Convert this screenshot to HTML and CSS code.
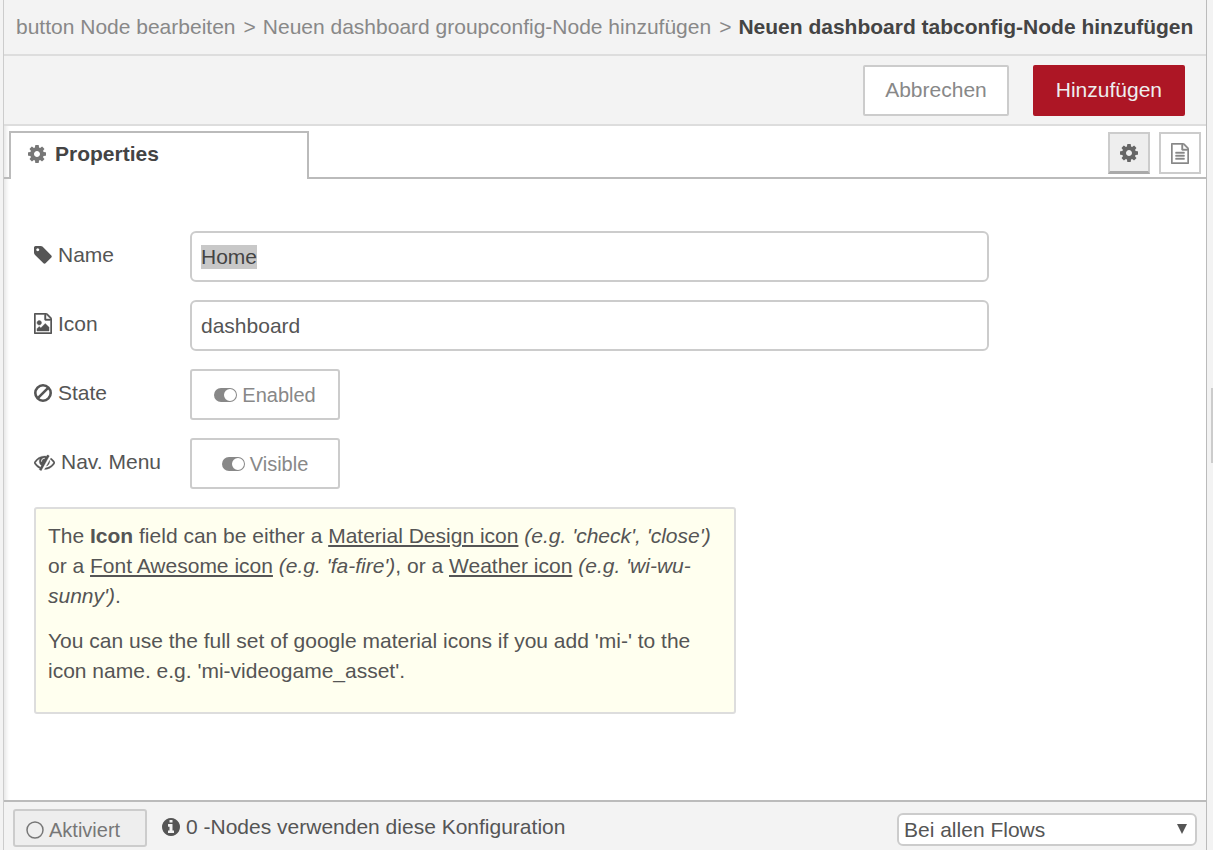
FILE: index.html
```html
<!DOCTYPE html>
<html lang="de">
<head>
<meta charset="utf-8">
<title>Neuen dashboard tabconfig-Node hinzufügen</title>
<link rel="stylesheet" href="styles.css">
</head>
<body>
<svg class="sprite" aria-hidden="true">
  <symbol id="cog" viewBox="0 128 1536 1536"><path d="M1024 896q0-106-75-181t-181-75-181 75-75 181 75 181 181 75 181-75 75-181zm512-109v222q0 12-8 23t-20 13l-185 28q-19 54-39 91 35 50 107 138 10 12 10 25t-9 23q-27 37-99 108t-94 71q-12 0-26-9l-138-108q-44 23-91 38-16 136-29 186-7 28-36 28h-222q-14 0-24.500-8.500t-11.500-21.500l-28-184q-49-16-90-37l-141 107q-10 9-25 9-14 0-25-11-126-114-165-168-7-10-7-23 0-12 8-23 15-21 51-66.500t54-70.500q-27-50-41-99l-183-27q-13-2-21-12.500t-8-23.500v-222q0-12 8-23t19-13l186-28q14-46 39-92-40-57-107-138-10-12-10-24 0-10 9-23 26-36 98.500-107.500t94.500-71.500q13 0 26 10l138 107q44-23 91-38 16-136 29-186 7-28 36-28h222q14 0 24.500 8.500t11.500 21.500l28 184q49 16 90 37l142-107q9-9 24-9 13 0 25 10 129 119 165 170 7 8 7 22 0 12-8 23-15 21-51 66.500t-54 70.500q26 50 41 98l183 28q13 2 21 12.500t8 23.500z"/></symbol>
  <symbol id="toggle" viewBox="0 0 23 14"><path fill-rule="evenodd" d="M7 0h9a7 7 0 0 1 0 14H7A7 7 0 0 1 7 0zM16 1a6 6 0 1 0 0 12a6 6 0 1 0 0-12z"/></symbol>
</svg>
<div class="shell">
  <main class="tray">
    <header class="crumbs">
      <span>button Node bearbeiten</span><span class="sep">&gt;</span><span>Neuen dashboard groupconfig-Node hinzufügen</span><span class="sep">&gt;</span><strong>Neuen dashboard tabconfig-Node hinzufügen</strong>
    </header>
    <div class="toolbar">
      <button type="button" class="btn">Abbrechen</button>
      <button type="button" class="btn primary">Hinzufügen</button>
    </div>
    <div class="tabs">
      <button type="button" class="tab"><svg class="icon"><use href="#cog"/></svg>Properties</button>
      <div class="tab-tools">
        <button type="button" class="tool active" aria-label="Properties"><svg class="icon"><use href="#cog"/></svg></button>
        <button type="button" class="tool" aria-label="Description"><svg class="page" viewBox="128 0 1536 1792"><path d="M1596 380q28 28 48 76t20 88v1152q0 40-28 68t-68 28h-1344q-40 0-68-28t-28-68v-1600q0-40 28-68t68-28h896q40 0 88 20t76 48zm-444-244v376h376q-10-29-22-41l-313-313q-12-12-41-22zm384 1528v-1024h-416q-40 0-68-28t-28-68v-416h-768v1536h1280zm-1024-864q0-14 9-23t23-9h704q14 0 23 9t9 23v64q0 14-9 23t-23 9h-704q-14 0-23-9t-9-23v-64zM1248 1024q14 0 23 9t9 23v64q0 14-9 23t-23 9h-704q-14 0-23-9t-9-23v-64q0-14 9-23t23-9h704zM1248 1280q14 0 23 9t9 23v64q0 14-9 23t-23 9h-704q-14 0-23-9t-9-23v-64q0-14 9-23t23-9h704z"/></svg></button>
      </div>
    </div>
    <form class="form">
      <div class="row">
        <label for="name"><svg class="icon" viewBox="128 128 1536 1536"><path d="M576 448q0-53-37.500-90.500t-90.500-37.500-90.500 37.500-37.500 90.500 37.500 90.500 90.500 37.500 90.500-37.500 37.500-90.500zm1067 576q0 53-37 90l-491 492q-39 37-91 37-53 0-90-37l-715-716q-38-37-64.500-101t-26.500-117v-416q0-52 38-90t90-38h416q53 0 117 26.500t102 64.500l715 714q37 39 37 91z"/></svg>Name</label>
        <input class="text" id="name" type="text" value="Home">
      </div>
      <div class="row">
        <label for="icon"><svg class="page" viewBox="128 0 1536 1792"><path d="M1596 380q28 28 48 76t20 88v1152q0 40-28 68t-68 28h-1344q-40 0-68-28t-28-68v-1600q0-40 28-68t68-28h896q40 0 88 20t76 48zm-444-244v376h376q-10-29-22-41l-313-313q-12-12-41-22zm384 1528v-1024h-416q-40 0-68-28t-28-68v-416h-768v1536h1280zm-128-448v320h-1024v-192l192-192 128 128 384-384zm-832-192q-80 0-136-56t-56-136 56-136 136-56 136 56 56 136-56 136-136 56z"/></svg>Icon</label>
        <input class="text" id="icon" type="text" value="dashboard">
      </div>
      <div class="row">
        <label for="state"><svg class="icon line" viewBox="0 0 18 18"><circle cx="9" cy="9" r="7.700"/><path d="M3.600 14.400L14.400 3.600"/></svg>State</label>
        <button type="button" class="switch" id="state"><svg class="toggle"><use href="#toggle"/></svg>Enabled</button>
      </div>
      <div class="row">
        <label for="menu"><svg class="eye" viewBox="0 128 1792 1536"><path d="M555 1335l78-141q-87-63-136-159t-49-203q0-121 61-225-229 117-381 353 167 258 427 375zm389-759q0-20-14-34t-34-14q-125 0-214.500 89.500t-89.500 214.500q0 20 14 34t34 14 34-14 14-34q0-86 61-147t147-61q20 0 34-14t14-34zm363-191q0 7-1 9-105 188-315 566t-316 567l-49 89q-10 16-28 16-12 0-134-70-16-10-16-28 0-12 44-87-143-65-263.500-173t-208.500-245q-20-31-20-69t20-69q153-235 380-371t496-136q89 0 180 17l54-97q10-16 28-16 5 0 18 6t31 15.500 33 18.500 31.500 18.500 19.500 11.500q16 10 16 27zm37 447q0 139-79 253.500t-209 164.500l280-502q8 45 8 84zm448 128q0 35-20 69-39 64-109 145-150 172-347.500 267t-419.500 95l74-132q212-18 392.500-137t301.500-307q-115-179-282-294l63-112q95 64 182.500 153t144.500 184q20 34 20 69z"/></svg>Nav. Menu</label>
        <button type="button" class="switch" id="menu"><svg class="toggle"><use href="#toggle"/></svg>Visible</button>
      </div>
      <div class="tips">
        <p>The <b>Icon</b> field can be either a <a href="#">Material Design icon</a> <i>(e.g. 'check', 'close')</i> or a <a href="#">Font Awesome icon</a> <i>(e.g. 'fa-fire')</i>, or a <a href="#">Weather icon</a> <i>(e.g. 'wi-wu-sunny')</i>.</p>
        <p>You can use the full set of google material icons if you add 'mi-' to the icon name. e.g. 'mi-videogame_asset'.</p>
      </div>
    </form>
    <footer class="footer">
      <button type="button" class="enable"><svg class="icon ring" viewBox="0 0 18 18"><circle cx="9" cy="9" r="8"/></svg>Aktiviert</button>
      <span class="usage"><svg class="icon" viewBox="128 128 1536 1536"><path d="M1152 1376v-160q0-14-9-23t-23-9h-96v-512q0-14-9-23t-23-9h-320q-14 0-23 9t-9 23v160q0 14 9 23t23 9h96v320h-96q-14 0-23 9t-9 23v160q0 14 9 23t23 9h448q14 0 23-9t9-23zm-128-896v-160q0-14-9-23t-23-9h-192q-14 0-23 9t-9 23v160q0 14 9 23t23 9h192q14 0 23-9t9-23zm640 416q0 209-103 385.500t-279.500 279.500-385.500 103-385.500-103-279.500-279.500-103-385.500 103-385.500 279.500-279.500 385.500-103 385.500 103 279.500 279.500 103 385.500z"/></svg>0 -Nodes verwenden diese Konfiguration</span>
      <div class="scope">
        <select aria-label="Flows"><option>Bei allen Flows</option></select>
        <svg class="arrow" viewBox="0 0 10 10"><path d="M0 0h10L5 10z"/></svg>
      </div>
    </footer>
  </main>
  <div class="gutter"><div class="grip"></div></div>
</div>
<script src="script.js"></script>
</body>
</html>
```
FILE: styles.css
```css
* { box-sizing: border-box; }
body {
  margin: 0;
  background: #f3f3f3;
  color: #555;
  font: 21px/30px "Liberation Sans", Arial, sans-serif;
}
button, input, select { font: inherit; color: inherit; margin: 0; }
svg { display: block; flex: none; fill: currentColor; }
.sprite { position: absolute; width: 0; height: 0; }
.icon { width: 18px; height: 18px; }
.page { width: 18px; height: 21px; stroke: currentColor; stroke-width: 36px; }
.eye { width: 21px; height: 18px; stroke: currentColor; stroke-width: 24px; }
.toggle { width: 23px; height: 14px; }
.line, .ring { fill: none; stroke: currentColor; }
.line { stroke-width: 2.600px; }
.ring { stroke-width: 1.500px; }

.shell { display: flex; min-height: 100vh; padding-left: 3px; }
.tray {
  flex: 1;
  min-width: 0;
  display: flex;
  flex-direction: column;
  border-left: 1px solid #ccc;
  border-right: 1px solid #bbb;
  background: #fff;
  box-shadow: inset 4px 0 4px -2px #e4e4e4;
}
.gutter { width: 6px; display: flex; align-items: center; justify-content: flex-end; }
.grip { width: 2px; height: 75px; background: #ccc; }

.crumbs {
  display: flex;
  align-items: center;
  height: 56px;
  padding: 0 12px;
  border-bottom: 2px solid #ddd;
  background: #f3f3f3;
  color: #888;
  white-space: nowrap;
}
.crumbs strong { color: #444; }
.sep { margin: 0 7px 0 8px; }
.toolbar {
  display: flex;
  justify-content: flex-end;
  gap: 24px;
  padding: 9px 21px 8px;
  border-bottom: 2px solid #ddd;
  background: #f3f3f3;
}
.btn {
  height: 51px;
  padding: 0 20px 2px;
  border: 2px solid #ccc;
  border-radius: 2px;
  background: #fff;
  color: #888;
}
.primary { padding: 0 21px 2px; border-color: #ad1625; background: #ad1625; color: #eee; }

.tabs {
  display: flex;
  align-items: flex-start;
  justify-content: space-between;
  padding: 5px 5px 0;
  border-bottom: 2px solid #bbb;
}
.tab {
  display: flex;
  align-items: center;
  gap: 9px;
  width: 300px;
  height: 48px;
  margin-bottom: -2px;
  padding: 0 17px 4px;
  border: 2px solid #bbb;
  border-bottom: 0;
  background: #fff;
  color: #444;
  font-weight: bold;
}
.tab .icon { color: #777; }
.tab-tools { display: flex; gap: 9px; padding-top: 1px; }
.tool {
  display: flex;
  align-items: center;
  justify-content: center;
  width: 42px;
  height: 42px;
  padding: 0;
  border: 2px solid #ccc;
  background: #fff;
  color: #888;
}
.active { border-bottom: 3px solid #aaa; background: #eee; color: #666; }

.form {
  flex: 1;
  display: flex;
  flex-direction: column;
  gap: 18px;
  padding: 52px 30px 30px;
}
.row { display: flex; align-items: center; }
.row label {
  display: flex;
  align-items: center;
  gap: 6px;
  width: 156px;
  padding-bottom: 4px;
}
.text {
  width: 70%;
  height: 51px;
  padding: 0 9px;
  border: 2px solid #ccc;
  border-radius: 6px;
  background: #fff;
  outline: none;
}
.text::selection { background: #c8c8c8; color: #444; }
.switch {
  display: flex;
  align-items: center;
  justify-content: center;
  gap: 5px;
  width: 150px;
  height: 51px;
  padding: 0;
  border: 2px solid #ccc;
  border-radius: 3px;
  background: #fff;
  color: #888;
  font-size: 20px;
}
.tips {
  max-width: 702px;
  padding: 12px 12px 11px;
  border: 2px solid #ddd;
  border-radius: 3px;
  background: #ffffef;
}
.tips p { margin: 0 0 15px; }
.tips a { color: inherit; text-decoration-thickness: 2px; text-underline-offset: 2px; }

.footer {
  display: flex;
  align-items: flex-start;
  height: 50px;
  padding: 7px 9px 0;
  border-top: 2px solid #bbb;
  background: #f3f3f3;
}
.enable {
  display: flex;
  align-items: center;
  gap: 5px;
  width: 134px;
  height: 38px;
  padding: 3px 11px 0;
  border: 2px solid #ccc;
  border-radius: 3px;
  background: #eee;
  color: #777;
  font-size: 20px;
}
.usage { display: flex; align-items: center; gap: 6px; margin: 3px 0 0 15px; }
.scope { position: relative; width: 300px; margin: 4px 0 0 auto; }
.scope select {
  display: block;
  width: 100%;
  height: 33px;
  padding: 0 5px 2px;
  border: 2px solid #ccc;
  border-radius: 6px;
  background: #fff;
  appearance: none;
}
.arrow { position: absolute; top: 11px; right: 10px; width: 10px; height: 10px; pointer-events: none; }
```
FILE: script.js
```js
const nameField = document.getElementById("name");
nameField.focus();
nameField.select();
```
